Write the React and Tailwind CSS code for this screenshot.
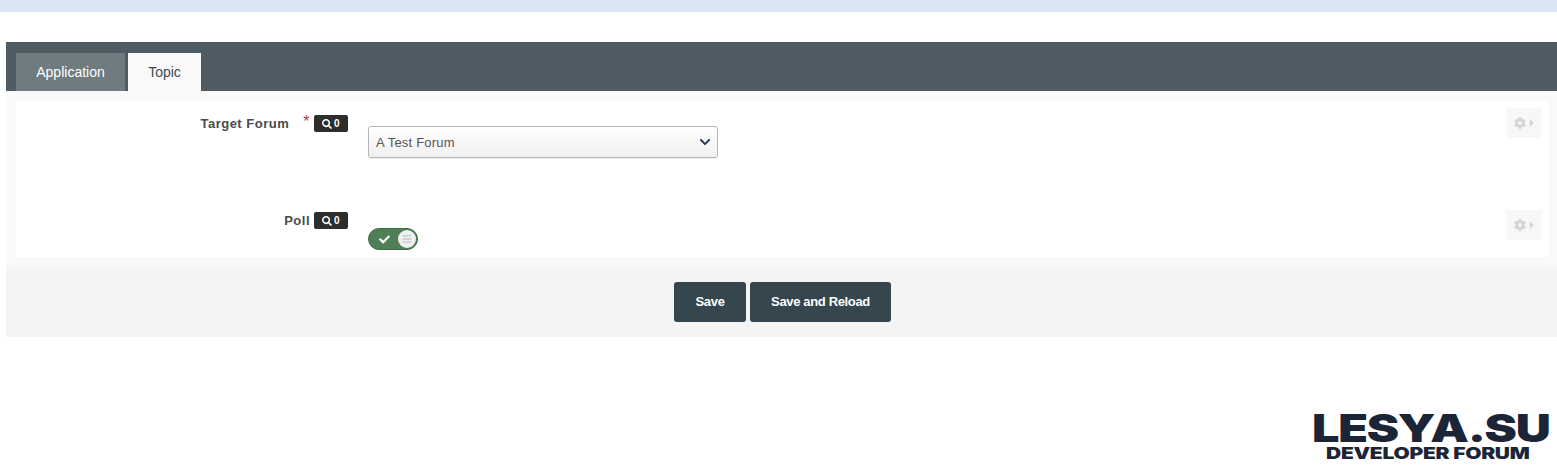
import React from "react";
import { FaSearch, FaCog, FaCaretRight, FaCheck, FaBars, FaChevronDown } from "react-icons/fa";

function Badge() {
  return (
    <span className="inline-flex h-[17px] w-[34px] items-center justify-center gap-[2px] rounded-[2px] bg-[#2e2e2e] text-[10px] font-bold leading-none text-white">
      <FaSearch className="h-[10px] w-[10px]" />
      <span>0</span>
    </span>
  );
}

function Gear() {
  return (
    <div className="flex h-[30px] w-[36px] items-center justify-center gap-[3px] rounded-[2px] bg-[#f7f7f7] text-[#d4d4d4]">
      <FaCog className="h-[12px] w-[12px]" />
      <FaCaretRight className="h-[12px] w-[6px]" />
    </div>
  );
}

export default function App() {
  return (
    <div className="h-[470px] w-[1557px] overflow-hidden bg-white font-['Liberation_Sans',Arial,sans-serif]">
      <div className="h-[12px] bg-[#dae6f1]" />
      <div className="ml-[6px] mt-[30px]">
        <div className="flex h-[49px] items-end gap-[3px] bg-[#505c64] pl-[10px]">
          <div className="flex h-[38px] w-[109px] items-center justify-center bg-[#6f7b7f] text-[14px] text-white">Application</div>
          <div className="flex h-[38px] w-[73px] items-center justify-center bg-[#f9f9f9] text-[14px] text-[#3d4a55]">Topic</div>
        </div>
        <div className="bg-[#f9f9f9] px-[10px] py-[10px] pr-[8px]">
          <div className="h-[156px] bg-white">
            <div className="flex h-[109px] items-start">
              <div className="flex w-[332px] items-center justify-end pt-[13px] text-[13px] font-bold tracking-[0.5px] text-[#4a4a4a]">
                <span className="mr-[14px]">Target Forum</span>
                <span className="mr-[4px] -translate-y-[2px] text-[16px] font-normal leading-none text-[#c23a3a]">*</span>
                <Badge />
              </div>
              <div className="relative ml-[20px] mt-[25px] h-[32px] w-[350px]">
                <select className="h-[32px] w-[350px] appearance-none rounded-[3px] border border-[#b5b5b5] bg-gradient-to-b from-white to-[#f0f0f0] px-[7px] pt-[2px] text-[13px] tracking-[0.2px] text-[#555555] shadow-[0_1px_1px_rgba(0,0,0,0.06)]">
                  <option>A Test Forum</option>
                </select>
                <FaChevronDown className="pointer-events-none absolute right-[6px] top-[10px] h-[12px] w-[14px] text-[#26374a]" />
              </div>
              <div className="ml-auto mr-[7px] mt-[7px]"><Gear /></div>
            </div>
            <div className="flex h-[47px] items-start">
              <div className="flex w-[332px] items-center justify-end gap-[4px] pt-[1px] text-[13px] font-bold tracking-[0.5px] text-[#4a4a4a]">
                <span>Poll</span>
                <Badge />
              </div>
              <div className="ml-[20px] mt-[18px] flex h-[22px] w-[50px] items-center justify-between rounded-full border border-[#3e6a45] bg-[#4f7f56] pl-[10px] pr-[1px]">
                <FaCheck className="h-[11px] w-[11px] text-white" />
                <span className="flex h-[18px] w-[18px] items-center justify-center rounded-full bg-[#f0f0f0]">
                  <FaBars className="h-[10px] w-[10px] text-[#c4c4c4]" />
                </span>
              </div>
              <div className="ml-auto mr-[7px]"><Gear /></div>
            </div>
          </div>
        </div>
        <div className="flex h-[70px] items-start justify-center gap-[4px] bg-[#f4f4f4] pl-[2px] pt-[15px]">
          <button className="h-[40px] w-[72px] rounded-[3px] bg-[#35464f] text-[13px] font-bold tracking-[-0.3px] text-white">Save</button>
          <button className="h-[40px] w-[141px] rounded-[3px] bg-[#35464f] text-[13px] font-bold tracking-[-0.35px] text-white">Save and Reload</button>
        </div>
      </div>
      <div className="mt-[76px] flex w-[1549px] flex-col items-end font-['Inter',sans-serif] font-black text-[#1c2537]">
        <div className="h-[31px] w-[237px] origin-left scale-x-[1.28] whitespace-nowrap text-[38px] leading-[31px] tracking-[-1px]">LESYA.SU</div>
        <div className="mr-[20px] mt-[2px] h-[14px] w-[203px] origin-left scale-x-[1.31] whitespace-nowrap text-[16px] leading-[14px] tracking-[-0.2px]">DEVELOPER FORUM</div>
      </div>
    </div>
  );
}
